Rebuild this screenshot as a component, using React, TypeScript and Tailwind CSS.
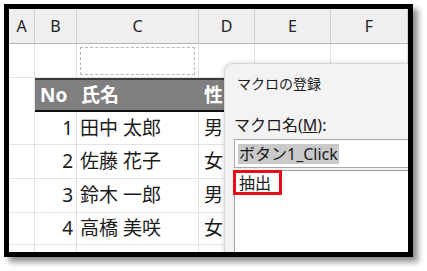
import React from "react";

const cols = ["A", "B", "C", "D", "E", "F"];
const rows = [
  { no: "1", name: "田中 太郎", sex: "男", h: "h-[33px]" },
  { no: "2", name: "佐藤 花子", sex: "女", h: "h-[34px]" },
  { no: "3", name: "鈴木 一郎", sex: "男", h: "h-[34px]" },
  { no: "4", name: "高橋 美咲", sex: "女", h: "h-[32px]" },
];

const grid = "grid grid-cols-[26px_42px_122px_56px_76px_1fr]";
const cell = "border-r border-b border-[#e2e2e2]";

function DataRow({ no, name, sex, h }: { no: string; name: string; sex: string; h: string }) {
  return (
    <div className={`${grid} ${h}`}>
      <div className={cell} />
      <div className={`${cell} flex items-center justify-end pr-[3px]`}>{no}</div>
      <div className={`${cell} flex items-center pl-[3px]`}>{name}</div>
      <div className={`${cell} flex items-center pl-[5px]`}>{sex}</div>
      <div className={cell} />
      <div className={cell} />
    </div>
  );
}

export default function App() {
  return (
    <div className="w-[427px] h-[271px] bg-white relative" style={{ fontFamily: '"Noto Sans", "Noto Sans CJK JP", sans-serif' }}>
      <div className="absolute left-[4px] top-[4px] w-[409px] h-[253px] border-[5px] border-black shadow-[5px_5px_6px_rgba(0,0,0,0.45)] overflow-hidden bg-white">
        <div className="relative w-full h-full text-[19px] text-[#1a1a1a] leading-none">
          {/* column headers */}
          <div className={`${grid} h-[35px] bg-[#efefef] border-b border-[#b5b5b5]`}>
            {cols.map((c) => (
              <div key={c} className="flex items-center justify-center border-r border-[#cfcfcf] text-[16px] text-[#222]">
                {c}
              </div>
            ))}
          </div>

          {/* row with the placeholder button */}
          <div className={`${grid} h-[34px]`}>
            <div className={cell} />
            <div className={cell} />
            <div className={`${cell} p-[3px] pb-[2px]`}>
              <div className="w-full h-full border border-dashed border-[#b8b8b8]" />
            </div>
            <div className={cell} />
            <div className={cell} />
            <div className={cell} />
          </div>

          {/* table header */}
          <div className={`${grid} h-[34px]`}>
            <div className="border-r border-[#e2e2e2]" />
            <div className="col-span-5 grid grid-cols-[42px_122px_56px_76px_1fr] bg-[#7f7f7f] border-t-2 border-t-[#3a3a3a] border-b-2 border-b-[#111] text-white font-bold">
              <div className="flex items-center pl-[5px]">No</div>
              <div className="flex items-center pl-[4px]">氏名</div>
              <div className="flex items-center pl-[5px]">性</div>
              <div />
              <div />
            </div>
          </div>

          {rows.map((r) => (
            <DataRow key={r.no} {...r} />
          ))}
          <div className={`${grid} h-[10px]`}>
            <div className={cell} />
            <div className={cell} />
            <div className={cell} />
            <div className={cell} />
            <div className={cell} />
            <div className={cell} />
          </div>

          {/* macro dialog */}
          <div className="absolute left-[215px] top-[54px] w-[220px] h-[220px] bg-[#f3f3f3] rounded-tl-[9px] border-l border-t border-[#d6d6d6] shadow-[-1px_-1px_4px_rgba(0,0,0,0.12)] flex flex-col text-[#1a1a1a]">
            <div className="pl-[12px] pt-[13px] text-[14px]">マクロの登録</div>
            <div className="pl-[9px] mt-[26px] text-[16px]">
              マクロ名(<span className="underline">M</span>):
            </div>
            <div className="ml-[9px] mt-[6px] h-[29px] bg-white border border-[#a9a9a9] flex items-center pl-[3px]">
              <span className="bg-[#c9c9c9] text-[16px] px-[1px] py-[2px]">ボタン1_Click</span>
            </div>
            <div className="ml-[9px] mt-[2px] flex-1 bg-white border-l border-t border-[#a0a0a0] relative">
              <div className="absolute left-[-2px] top-[-1px] w-[49px] h-[25px] border-[3px] border-[#e3101c] flex items-center pl-[3px] text-[16px]">
                抽出
              </div>
            </div>
          </div>
        </div>
      </div>
    </div>
  );
}
